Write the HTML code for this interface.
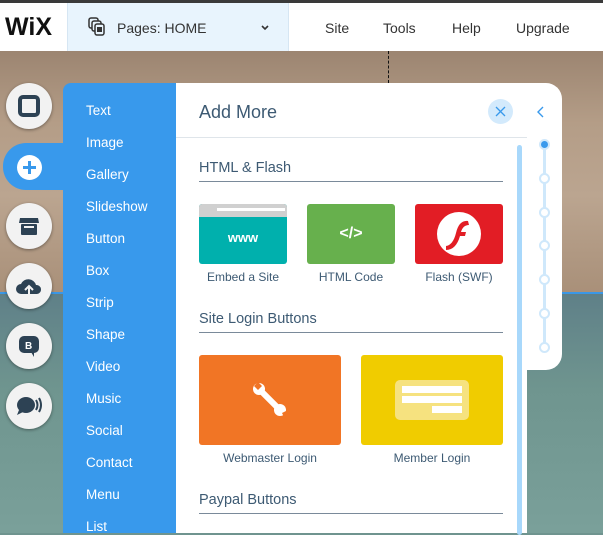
<!DOCTYPE html>
<html><head><style>
*{margin:0;padding:0;box-sizing:border-box}
body{width:603px;height:533px;overflow:hidden;position:relative;font-family:"Liberation Sans",sans-serif;background:#6f948f}
.top{position:absolute;left:0;top:0;width:603px;height:3px;background:#3a3a3a}
.hdr{position:absolute;left:0;top:3px;width:603px;height:48px;background:#fff}
.logo{position:absolute;left:5px;top:13px;font:bold 25px "Liberation Sans",sans-serif;letter-spacing:0px;color:#111}
.pages{position:absolute;left:67px;top:3px;width:222px;height:48px;background:#e8f4fd;border-left:1px solid #d6e6f3;border-right:1px solid #d6e6f3}
.pages span{position:absolute;left:49px;top:17px;font-size:14px;color:#333}
.menu{position:absolute;top:20px;font-size:14px;color:#333}
.canvas1{position:absolute;left:0;top:51px;width:603px;height:241px;background:linear-gradient(180deg,#9c8571 0%,#b49d87 30%,#bba590 60%,#a99079 100%)}
.bl{position:absolute;left:0;top:292px;width:603px;height:2px;background:#3b97e5}
.canvas2{position:absolute;left:0;top:294px;width:603px;height:239px;background:linear-gradient(180deg,#5f8088 0%,#6f958f 40%,#7aa09a 100%)}
.circ{position:absolute;left:6px;width:46px;height:46px;border-radius:50%;background:#f2f2f2;box-shadow:0 1px 3px rgba(0,0,0,.4);display:flex;align-items:center;justify-content:center}
.blue{position:absolute;left:63px;top:83px;width:113px;height:450px;background:#3899ec;border-top-left-radius:8px}
.blue div{position:absolute;left:23px;color:#fff;font-size:13.5px}
.tab{position:absolute;left:3px;top:143px;width:70px;height:47px;background:#3899ec;border-radius:23px 0 0 23px}
.panel{position:absolute;left:176px;top:83px;width:351px;height:450px;background:#fff}
.ttl{position:absolute;left:23px;top:19px;font-size:18px;color:#3d5a73}
.hl{position:absolute;left:0;top:54px;width:351px;height:1px;background:#dfe5ea}
.x{position:absolute;left:312px;top:16px;width:25px;height:25px;border-radius:50%;background:#d3eafc}
.sec{position:absolute;left:23px;width:304px;font-size:14.5px;color:#3d5a73;border-bottom:1px solid #7a8a9a;padding-bottom:5px}
.tile{position:absolute;border-radius:3px}
.lbl{position:absolute;font-size:12px;color:#3d5a73;text-align:center}
.sb{position:absolute;left:341px;top:62px;width:5px;height:390px;background:#a8d8fb;border-radius:3px}
.side{position:absolute;left:527px;top:83px;width:35px;height:287px;background:#fff;border-radius:0 16px 16px 0}
.rail{position:absolute;left:16px;top:62px;width:3px;height:202px;background:#cfe8fb}
.dot{position:absolute;left:12px;width:11px;height:11px;border-radius:50%;background:#fff;border:2px solid #cfe8fb}
</style></head><body>
<div class="top"></div>
<div class="hdr"></div>
<div class="logo">WiX</div>
<div class="pages">
<svg style="position:absolute;left:20px;top:14px" width="18" height="20" viewBox="0 0 18 20"><rect x="1" y="1" width="9" height="10" rx="2" fill="none" stroke="#333" stroke-width="1.5"/><rect x="4" y="4" width="9" height="10" rx="2" fill="#e8f4fd" stroke="#333" stroke-width="1.5"/><rect x="7" y="7" width="9" height="11" rx="2" fill="#e8f4fd" stroke="#333" stroke-width="1.5"/><rect x="9" y="10" width="5" height="5" fill="#333"/></svg>
<span>Pages: HOME</span>
<svg style="position:absolute;left:193px;top:22px" width="8" height="6"><path d="M1 1l3 3 3-3" stroke="#333" stroke-width="1.6" fill="none"/></svg>
</div>
<div class="menu" style="left:325px">Site</div>
<div class="menu" style="left:383px">Tools</div>
<div class="menu" style="left:452px">Help</div>
<div class="menu" style="left:516px">Upgrade</div>
<div class="canvas1"></div>
<div style="position:absolute;left:388px;top:51px;width:1px;height:32px;border-left:1px dashed #111"></div>
<div class="bl"></div>
<div class="canvas2"></div>

<div class="blue">
<div style="top:20px">Text</div><div style="top:52px">Image</div><div style="top:84px">Gallery</div><div style="top:116px">Slideshow</div><div style="top:148px">Button</div><div style="top:180px">Box</div><div style="top:212px">Strip</div><div style="top:244px">Shape</div><div style="top:276px">Video</div><div style="top:308px">Music</div><div style="top:340px">Social</div><div style="top:372px">Contact</div><div style="top:404px">Menu</div><div style="top:436px">List</div>
</div>
<div class="tab"></div>
<div class="circ" style="top:83px"><svg width="24" height="24"><rect x="3" y="3" width="18" height="18" rx="3" fill="none" stroke="#2d4254" stroke-width="4"/></svg></div>
<div style="position:absolute;left:17px;top:155px;width:25px;height:25px;border-radius:50%;background:#fff"><svg width="25" height="25"><path d="M12.5 6v13M6 12.5h13" stroke="#3899ec" stroke-width="3"/></svg></div>
<div class="circ" style="top:203px"><svg width="24" height="24"><path d="M3 4h18l1 5H2z" fill="#2d4254"/><rect x="4" y="10" width="16" height="11" rx="1" fill="#2d4254"/><rect x="7" y="12" width="10" height="2" fill="#f2f2f2"/></svg></div>
<div class="circ" style="top:263px"><svg width="28" height="24"><path d="M6 20a5 5 0 0 1 0-10 8 8 0 0 1 15 1 4.5 4.5 0 0 1 1 9z" fill="#2d4254"/><path d="M14 21v-8M10 16l4-4 4 4" stroke="#f2f2f2" stroke-width="2" fill="none"/></svg></div>
<div class="circ" style="top:323px"><svg width="26" height="26"><rect x="3" y="3" width="20" height="17" rx="5" fill="#2d4254"/><path d="M15 19l3 5 0-5z" fill="#2d4254"/><text x="9" y="16" font-family="Liberation Sans" font-weight="bold" font-size="10" fill="#fff">B</text></svg></div>
<div class="circ" style="top:383px"><svg width="28" height="26"><ellipse cx="11" cy="12" rx="9" ry="8" fill="#2d4254"/><path d="M4 17l-2 5 6-3z" fill="#2d4254"/><path d="M21 7q3 5 0 10M24 5q4 7 0 14" stroke="#2d4254" stroke-width="2" fill="none"/></svg></div>

<div class="panel">
<div class="ttl">Add More</div>
<div class="x"><svg width="25" height="25"><path d="M8 8l9 9M17 8l-9 9" stroke="#3899ec" stroke-width="1.3"/></svg></div>
<div class="hl"></div>
<div class="sec" style="top:77px">HTML &amp; Flash</div>
<div class="tile" style="left:23px;top:121px;width:88px;height:60px;background:#00b0ad;overflow:hidden"><div style="height:13px;background:#d0d0d0"></div><div style="color:#fff;font-weight:bold;font-size:13px;text-align:center;margin-top:13px">www</div><div style="position:absolute;left:18px;top:4px;width:68px;height:3px;background:#fff"></div></div>
<div class="tile" style="left:131px;top:121px;width:88px;height:60px;background:#67b04d;color:#fff;font-weight:bold;font-size:16px;text-align:center;line-height:60px">&lt;/&gt;</div>
<div class="tile" style="left:239px;top:121px;width:88px;height:60px;background:#e21d25"><div style="position:absolute;left:22px;top:8px;width:44px;height:44px;border-radius:50%;background:#fff"><svg width="44" height="44"><path d="M31 9q-9-1-12 12q-3 12-10 13l0 4q10 0 14-14h5l1-4h-5q2-7 8-7z" fill="#e21d25"/></svg></div></div>
<div class="lbl" style="left:23px;top:187px;width:88px">Embed a Site</div>
<div class="lbl" style="left:131px;top:187px;width:88px">HTML Code</div>
<div class="lbl" style="left:239px;top:187px;width:88px">Flash (SWF)</div>
<div class="sec" style="top:228px">Site Login Buttons</div>
<div class="tile" style="left:23px;top:272px;width:142px;height:90px;background:#f17525"><svg style="position:absolute;left:51px;top:25px" width="40" height="40"><path d="M8 8l22 22" stroke="#fff" stroke-width="6"/><circle cx="9" cy="9" r="6" fill="#fff"/><circle cx="30" cy="30" r="6" fill="#fff"/><path d="M4 6l4-4 4 4-4 4zM32 33l2 4 4-2-2-4z" fill="#f17525"/></svg></div>
<div class="tile" style="left:185px;top:272px;width:142px;height:90px;background:#f0cc00"><div style="position:absolute;left:34px;top:25px;width:74px;height:40px;border-radius:5px;background:#f6e27f"></div><div style="position:absolute;left:41px;top:31px;width:60px;height:7px;background:#fff"></div><div style="position:absolute;left:41px;top:41px;width:60px;height:7px;background:#fff"></div><div style="position:absolute;left:71px;top:51px;width:30px;height:7px;background:#fff"></div></div>
<div class="lbl" style="left:23px;top:368px;width:142px">Webmaster Login</div>
<div class="lbl" style="left:185px;top:368px;width:142px">Member Login</div>
<div class="sec" style="top:409px">Paypal Buttons</div>
<div class="sb"></div>
</div>

<div class="side">
<svg style="position:absolute;left:9px;top:23px" width="10" height="12"><path d="M7 1l-5 5 5 5" stroke="#3899ec" stroke-width="1.4" fill="none"/></svg>
<div class="rail"></div>
<div class="dot" style="top:56px;background:#3899ec;border-color:#cfe8fb"></div>
<div class="dot" style="top:90px"></div><div class="dot" style="top:124px"></div><div class="dot" style="top:157px"></div><div class="dot" style="top:191px"></div><div class="dot" style="top:225px"></div><div class="dot" style="top:259px"></div>
</div>
</body></html>
